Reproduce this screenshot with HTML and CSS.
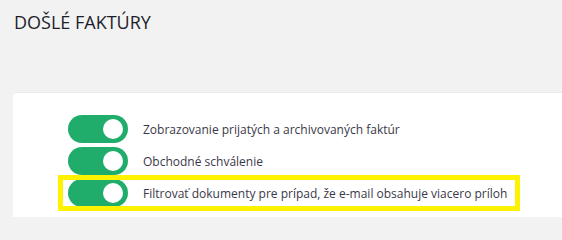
FILE: index.html
```html
<!DOCTYPE html>
<html lang="sk">
<head>
<meta charset="utf-8">
<title>Došlé faktúry</title>
<link rel="stylesheet" href="styles.css">
</head>
<body>
<h1 class="title">DOŠLÉ FAKTÚRY</h1>
<div class="card">
  <ul class="settings">
    <li class="row">
      <span class="toggle on"><span class="knob"></span></span>
      <span class="label">Zobrazovanie prijatých a archivovaných faktúr</span>
    </li>
    <li class="row">
      <span class="toggle on"><span class="knob"></span></span>
      <span class="label">Obchodné schválenie</span>
    </li>
    <li class="row highlight">
      <span class="toggle on"><span class="knob"></span></span>
      <span class="label">Filtrovať dokumenty pre prípad, že e-mail obsahuje viacero príloh</span>
    </li>
  </ul>
</div>
</body>
</html>
```

FILE: styles.css
```css
html, body {
  margin: 0;
  padding: 0;
  height: 217px;
  background: #f2f2f2;
  font-family: "Open Sans", "Liberation Sans", sans-serif;
  overflow: hidden;
}
.title {
  margin: 0;
  padding: 10px 0 0 14px;
  font-size: 18px;
  font-weight: 400;
  color: #1e1e2a;
  line-height: 24px;
  height: 93px;
  box-sizing: border-box;
}
.card {
  margin-left: 13px;
  height: 124px;
  background: #fff;
  border-radius: 4px 0 0 0;
  box-shadow: 0 -1px 1px rgba(0,0,0,0.03);
  overflow: hidden;
}
.settings {
  list-style: none;
  margin: 0;
  padding: 22px 0 0 55px;
}
.row {
  display: flex;
  align-items: center;
  gap: 15px;
  height: 28px;
  margin-bottom: 4px;
  width: 454px;
}
.highlight {
  outline: 5px solid #fff200;
  outline-offset: -1px;
  margin-left: -6px;
  padding-left: 6px;
  width: 448px;
}
.toggle {
  display: flex;
  align-items: center;
  justify-content: flex-end;
  width: 60px;
  height: 28px;
  border-radius: 14px;
  background: #20ad6c;
  padding-right: 5px;
  box-sizing: border-box;
  flex-shrink: 0;
}
.knob {
  width: 20px;
  height: 20px;
  border-radius: 50%;
  background: #fff;
}
.label {
  font-size: 12px;
  color: #3a3848;
}
```
